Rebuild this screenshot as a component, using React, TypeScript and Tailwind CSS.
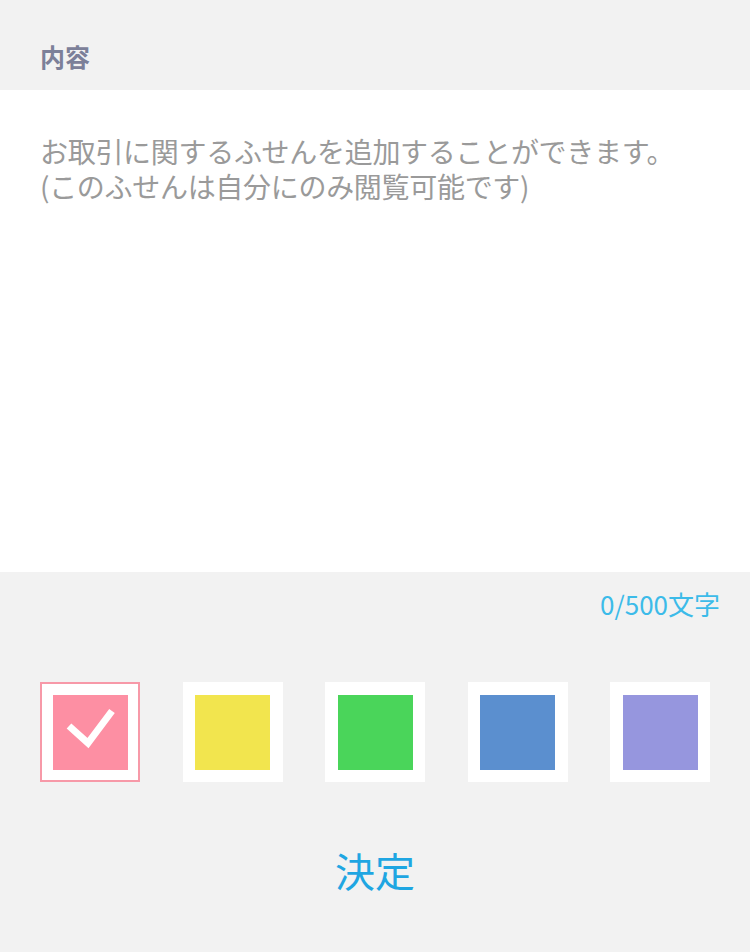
import React from "react";

const colors = ["#fd8fa3", "#f2e54e", "#4ad55a", "#5b8fcf", "#9696de"];

export default function App() {
  const selected = 0;
  return (
    <div
      className="w-[750px] h-[952px] bg-[#f2f2f2] flex flex-col"
      style={{ fontFamily: '"Noto Sans CJK JP", "Noto Sans", sans-serif' }}
    >
      <div className="h-[90px] flex items-center px-10 pt-[22px]">
        <span className="text-[25px] font-bold text-[#7c8099] leading-none">内容</span>
      </div>
      <div className="h-[482px] bg-white px-10 pt-[44px]">
        <p className="text-[28px] leading-[35px] text-[#9a9a9a] tracking-[-0.3px]">
          お取引に関するふせんを追加することができます。
          <br />
          (このふせんは自分にのみ閲覧可能です)
        </p>
      </div>
      <div className="flex justify-end px-[30px] pt-[16px] h-[64px]">
        <span className="text-[26px] leading-[32px] text-[#3cbbe9]">0/500文字</span>
      </div>
      <div className="flex justify-between px-10 mt-[46px]">
        {colors.map((c, i) => (
          <div
            key={c}
            className={
              "w-[100px] h-[100px] bg-white flex items-center justify-center " +
              (i === selected ? "border-2 border-[#f799a8]" : "")
            }
          >
            <div className="w-[75px] h-[75px]" style={{ backgroundColor: c }}>
              {i === selected && (
                <svg width="75" height="75" viewBox="0 0 75 75">
                  <path d="M16 31 L35 48 L59 16" fill="none" stroke="white" strokeWidth="7" strokeLinecap="butt" />
                </svg>
              )}
            </div>
          </div>
        ))}
      </div>
      <div className="flex justify-center mt-[68px]">
        <span className="text-[40px] leading-none text-[#1fa6e2]">決定</span>
      </div>
    </div>
  );
}
